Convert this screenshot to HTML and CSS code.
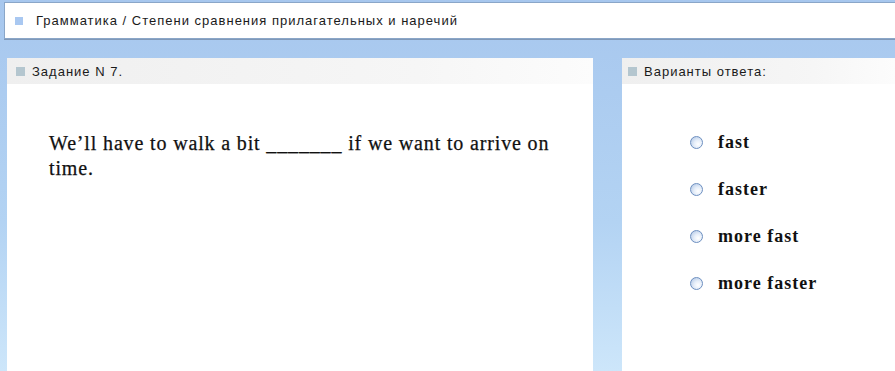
FILE: index.html
```html
<!DOCTYPE html>
<html lang="ru">
<head>
    <meta charset="UTF-8">
    <title>Задание N 7</title>
    <link rel="stylesheet" href="styles.css">
</head>
<body>
    <div class="topbar">
        <span class="marker"></span>
        <span class="crumbs">Грамматика / Степени сравнения прилагательных и наречий</span>
    </div>

    <div class="main">
        <div class="panel task">
            <div class="panel-head"><span class="marker gray"></span>Задание N 7.</div>
            <p class="question">We’ll have to walk a bit _______ if we want to arrive on time.</p>
        </div>

        <div class="panel answers">
            <div class="panel-head"><span class="marker gray"></span>Варианты ответа:</div>
            <ul class="options">
                <li><span class="radio"></span>fast</li>
                <li><span class="radio"></span>faster</li>
                <li><span class="radio"></span>more fast</li>
                <li><span class="radio"></span>more faster</li>
            </ul>
        </div>
    </div>
</body>
</html>
```

FILE: styles.css
```css
html, body {
    height: 100%;
}

body {
    margin: 0;
    display: flex;
    flex-direction: column;
    font-family: "Liberation Sans", Arial, sans-serif;
    font-size: 13px;
    letter-spacing: 1px;
    color: #1a1a1a;
    background: linear-gradient(to bottom, #a7c7ee 0%, #b3d3f3 60%, #cde6fa 100%);
}

.topbar {
    display: flex;
    align-items: center;
    height: 35px;
    margin: 2px 0 0 4px;
    padding-left: 10px;
    background-color: #fff;
    border: 1px solid #8aa6c8;
    border-right: none;
    box-shadow: 0 1px 0 #7f98b8;
}

.marker {
    display: inline-block;
    width: 8px;
    height: 8px;
    margin-right: 13px;
    background-color: #a9c8f1;
}

.marker.gray {
    width: 9px;
    height: 9px;
    margin-right: 7px;
    background-color: #b4c6cf;
}

.main {
    flex: 1;
    display: flex;
    gap: 29px;
    margin-top: 19px;
    padding-left: 7px;
}

.panel {
    background-color: #fff;
}

.task {
    width: 586px;
}

.answers {
    flex: 1;
}

.panel-head {
    display: flex;
    align-items: center;
    height: 26px;
    padding-left: 9px;
    background: linear-gradient(to right, #efefef 0%, #f6f6f6 70%, #fcfcfc 100%);
}

.answers .panel-head {
    padding-left: 6px;
}

.question {
    margin: 47px 0 0 42px;
    width: 530px;
    font-family: "Liberation Serif", "Times New Roman", serif;
    font-size: 20px;
    letter-spacing: 0.85px;
    line-height: 25px;
    color: #111;
    -webkit-text-stroke: 0.25px #111;
}

.options {
    list-style: none;
    margin: 35px 0 0 68px;
    padding: 0;
    font-family: "Liberation Serif", "Times New Roman", serif;
    font-size: 18px;
    font-weight: bold;
    color: #111;
}

.options li {
    display: flex;
    align-items: center;
    height: 47px;
}

.radio {
    display: inline-block;
    box-sizing: border-box;
    width: 13px;
    height: 13px;
    margin-right: 15px;
    border: 1.5px solid #6d8fc0;
    border-radius: 50%;
    background: radial-gradient(circle at 65% 65%, #fff 0%, #e6eef9 40%, #a9c1e2 100%);
}
```
